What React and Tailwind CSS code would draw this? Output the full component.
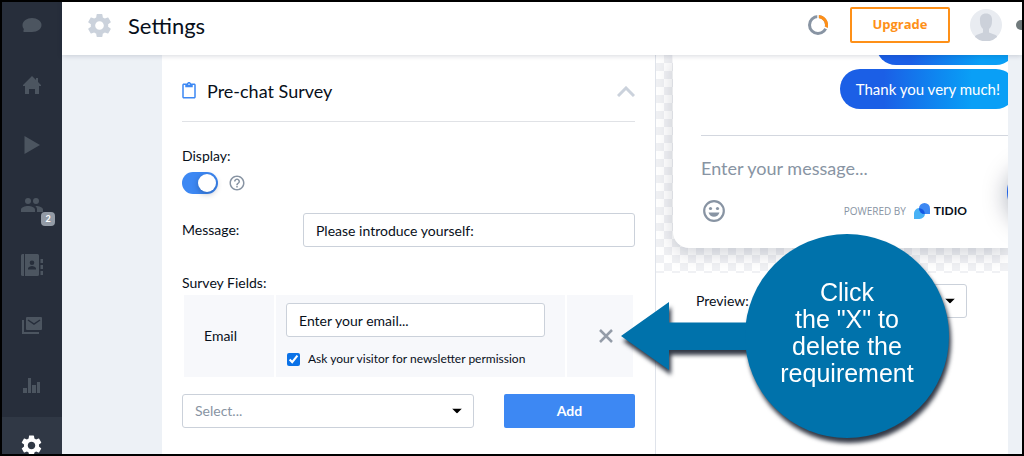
import { useState } from "react";
import { MdContentPaste, MdHelpOutline, MdSettings } from "react-icons/md";

const ChatIcon = () => (
  <svg width="20" height="16" viewBox="0 0 20 16" fill="currentColor">
    <path d="M10 1c5 0 9.500 3 9.500 7s-4 7-9.500 7H1.500v-2L2 12C.8 11 .5 9.500.5 8c0-4 4.500-7 9.500-7Z" />
  </svg>
);

const HomeIcon = () => (
  <svg width="20" height="20" viewBox="0 0 20 20" fill="currentColor">
    <path d="m10 1 4 4V3h2v4l3 3v1h-2v8h-4v-5H7v5H3v-8H1v-1Z" />
  </svg>
);

const PlayIcon = () => (
  <svg width="16" height="20" viewBox="0 0 16 20" fill="currentColor">
    <path d="M0.500 1v18L16 10Z" />
  </svg>
);

const PeopleIcon = () => (
  <svg width="22" height="14" viewBox="0 0 22 14" fill="currentColor">
    <circle cx="7" cy="3" r="3" />
    <circle cx="15" cy="3" r="3" />
    <path d="M0 14v-2.500C0 9.500 4 8 7 8s7 1.500 7 3.500V14ZM15 8c3 0 7 1.500 7 3.500V14h-6v-2.500c0-1.500-.6-2.600-1.700-3.400Z" />
  </svg>
);

const ContactsIcon = () => (
  <svg width="22" height="22" viewBox="0 0 22 22" fill="currentColor">
    <path d="M0 1.500Q0 0 1.500 0H3v22H1.500Q0 22 0 20.500Z" />
    <path
      fillRule="evenodd"
      d="M4 0h12.500Q18 0 18 1.500v19Q18 22 16.500 22H4ZM11 6.500a2.300 2.300 0 1 0 0 4.600 2.300 2.300 0 0 0 0-4.600ZM7 15.500h8v-1c0-1.500-2.500-2.500-4-2.500s-4 1-4 2.500Z"
    />
    <path d="M19.500 5H22v4h-2.500ZM19.500 11H22v4h-2.500ZM19.500 17H22v4h-2.500Z" />
  </svg>
);

const MailIcon = () => (
  <svg width="20" height="17" viewBox="0 0 20 17" fill="none" stroke="currentColor">
    <rect x="4" y="0" width="16" height="13" rx="1" fill="currentColor" stroke="none" />
    <path d="M1 3v13h16" strokeWidth="2" />
    <path d="m6 3 6 4 6-4" stroke="#272e3b" strokeWidth="1.500" />
  </svg>
);

const ChartIcon = () => (
  <svg width="18" height="16" viewBox="0 0 18 16" fill="currentColor">
    <path d="M0 11h4v5H0ZM5 1h3v15H5ZM9 8h4v8H9ZM14 5h3v11h-3Z" />
  </svg>
);

const navItems = [
  { label: "Chat", icon: <ChatIcon /> },
  { label: "Home", icon: <HomeIcon /> },
  { label: "Live", icon: <PlayIcon /> },
  { label: "Visitors", icon: <PeopleIcon />, badge: 2 },
  { label: "Contacts", icon: <ContactsIcon /> },
  { label: "Mailing", icon: <MailIcon /> },
  { label: "Analytics", icon: <ChartIcon /> },
];

const Sidebar = () => (
  <nav className="w-15 shrink-0 overflow-hidden bg-[#272e3b] text-[#4c5560]">
    <div className="-mt-[7px]">
      {navItems.map(({ label, icon, badge }) => (
        <a
          key={label}
          href="#"
          aria-label={label}
          className="relative flex h-15 items-center justify-center hover:text-white"
        >
          {icon}
          {badge && (
            <span className="absolute right-[7px] bottom-[9px] flex h-3.5 w-3.5 items-center justify-center rounded bg-[#939ba6] text-[9px] font-bold text-white">
              {badge}
            </span>
          )}
        </a>
      ))}
      <a
        href="#"
        aria-label="Settings"
        className="mt-0.5 flex h-14 items-center justify-center bg-[#303845] pr-px text-white"
      >
        <MdSettings size={25} />
      </a>
    </div>
  </nav>
);

const Header = () => (
  <header className="relative z-10 flex h-[53px] shrink-0 items-center bg-white pb-[7px] pl-[23px] shadow-[0_1px_5px_rgba(0,18,46,0.16)]">
    <MdSettings size={29} className="text-[#cbd2dc]" />
    <h1 className="ml-3.5 text-[22px] text-[#080f1a]">Settings</h1>
    <div className="ml-auto flex items-center">
      <svg width="20" height="20" viewBox="0 0 20 20" fill="none" strokeWidth="3" className="mr-[22px]">
        <circle cx="10" cy="10" r="8.500" stroke="#8894a3" />
        <path d="M10.500 1.500A8.500 8.500 0 0 1 18 13" stroke="#fe8f18" />
        <path d="M10 0v4M16 12l4 2" stroke="#fff" strokeWidth="1.500" />
      </svg>
      <button className="h-9 w-25 rounded-xs border-2 border-[#fe9018] bg-white font-['Open_Sans',sans-serif] text-[13px] font-bold text-[#fe9018]">
        Upgrade
      </button>
      <svg width="32" height="32" viewBox="0 0 32 32" className="ml-5">
        <circle cx="16" cy="16" r="16" fill="#e9ecf1" />
        <path
          d="M16 4.500c-4.500 0-6.500 3-6 7.500 0 4 1 6 3 8v3.500l-6.500 2.500c-1 .5-1.500 1-1.500 2a16 16 0 0 0 22 0c0-1-.5-1.500-1.500-2L19 23.500V20c2-2 3-4 3-8 .5-4.500-1.500-7.500-6-7.500Z"
          fill="#ccd1da"
        />
      </svg>
      <span className="ml-3.5 flex w-1.5 overflow-hidden">
        <span className="h-2.5 w-2.5 shrink-0 rounded-full bg-[#707a7c]" />
      </span>
    </div>
  </header>
);

const Caret = () => (
  <svg
    width="10"
    height="5"
    viewBox="0 0 10 5"
    className="pointer-events-none absolute top-1/2 right-3 -translate-y-1/2"
  >
    <path d="M0 0h10L5 5Z" />
  </svg>
);

const inputClass =
  "h-[34px] rounded-[3px] border border-[#cbd1da] bg-white px-3 text-sm outline-none";

const SurveySettings = () => {
  const [display, setDisplay] = useState(true);
  const [newsletter, setNewsletter] = useState(true);

  return (
    <section className="border-r border-[#dfe3ea] bg-white px-5">
      <div className="flex h-[67px] items-center border-b border-[#e0e2e6] pt-1.5">
        <MdContentPaste size={18} className="-ml-0.5 text-[#3d88f3]" />
        <h2 className="ml-[9px] text-lg">Pre-chat Survey</h2>
        <button aria-label="Collapse" className="ml-auto">
          <svg width="18" height="11" viewBox="0 0 18 11" fill="none" stroke="#cbd2dc" strokeWidth="3">
            <path d="m1 10 8-8 8 8" />
          </svg>
        </button>
      </div>

      <label htmlFor="display" className="mt-6 block text-sm">
        Display:
      </label>
      <div className="mt-1.5 flex items-center gap-[11px]">
        <span className="relative flex h-[22px] w-9">
          <input
            id="display"
            type="checkbox"
            checked={display}
            onChange={() => setDisplay(!display)}
            className="peer h-full w-full appearance-none rounded-full bg-gray-300 checked:bg-[#3d88f3]"
          />
          <span className="pointer-events-none absolute top-0.5 left-0.5 h-[18px] w-[18px] rounded-full bg-white shadow-[0_2px_6px_rgba(0,18,46,0.3)] peer-checked:right-0.5 peer-checked:left-auto" />
        </span>
        <MdHelpOutline size={18} className="-ml-px text-[#8894a3]" />
      </div>

      <div className="mt-[19px] flex items-center">
        <label htmlFor="message" className="w-[121px] shrink-0 text-sm">
          Message:
        </label>
        <input id="message" defaultValue="Please introduce yourself:" className={`${inputClass} min-w-0 flex-1`} />
      </div>

      <p className="mt-[26px] text-sm">Survey Fields:</p>
      <table className="w-full border-separate border-spacing-0.5">
        <tbody>
          <tr className="h-[82px]">
            <th scope="row" className="w-[90px] bg-[#f7f8fb] pl-5 text-left text-sm font-normal">
              Email
            </th>
            <td className="bg-[#f7f8fb] pt-2 pr-5 pl-2.5 align-top">
              <input aria-label="Email placeholder" defaultValue="Enter your email..." className={`${inputClass} w-full`} />
              <label className="mt-3.5 flex items-center gap-2 text-xs">
                <input
                  type="checkbox"
                  checked={newsletter}
                  onChange={() => setNewsletter(!newsletter)}
                  className="ml-px h-[13px] w-[13px] accent-[#0b72e7]"
                />
                Ask your visitor for newsletter permission
              </label>
            </td>
            <td className="w-[66px] bg-[#f7f8fb] pr-5">
              <button aria-label="Delete field" className="ml-auto block">
                <svg width="14" height="14" viewBox="0 0 14 14" stroke="#949ca8" strokeWidth="2.500">
                  <path d="m1 1 12 12M13 1 1 13" />
                </svg>
              </button>
            </td>
          </tr>
        </tbody>
      </table>

      <div className="mt-[15px] flex gap-[30px]">
        <div className="relative flex-1">
          <select aria-label="Survey field" className={`${inputClass} w-full appearance-none text-[#8894a3]`}>
            <option>Select...</option>
          </select>
          <Caret />
        </div>
        <button className="h-[34px] w-[131px] rounded-xs bg-[#3d88f3] text-sm font-bold text-white">Add</button>
      </div>
    </section>
  );
};

const ChatPreview = () => (
  <section className="overflow-hidden bg-white">
    <div className="relative h-[218px] overflow-hidden bg-[repeating-conic-gradient(#f0f1f4_0_25%,#fff_0_50%)] bg-[length:16px_16px] pl-[17px]">
      <div className="h-[193px] rounded-bl-2xl bg-white pl-7 shadow-[0_5px_18px_rgba(0,18,46,0.18)]">
        <div className="-mr-2 flex h-20 flex-col items-end justify-end gap-1 pb-[26px]">
          <div className="h-10 w-[140px] shrink-0 rounded-full bg-linear-to-r from-[#1b5fe6] from-25% to-[#0a9ff6] to-75%" />
          <p className="flex h-10 shrink-0 items-center rounded-full bg-linear-to-r from-[#1b5fe6] from-25% to-[#0a9ff6] to-75% px-4 text-[15px] text-white">
            Thank you very much!
          </p>
        </div>
        <input
          aria-label="Message"
          placeholder="Enter your message..."
          className="h-[65px] w-full border-t border-[#d3d7df] text-lg outline-none placeholder:text-[#8894a3]"
        />
        <div className="flex items-center pr-[41px]">
          <button aria-label="Emoji" className="ml-0.5">
            <svg width="22" height="22" viewBox="0 0 22 22" fill="#8894a3">
              <circle cx="11" cy="11" r="9.800" fill="none" stroke="#8894a3" strokeWidth="2.200" />
              <circle cx="7.500" cy="8.500" r="1.600" />
              <circle cx="14.500" cy="8.500" r="1.600" />
              <path d="M5.500 12.500h11c-.8 2.700-3 4.300-5.500 4.300s-4.700-1.600-5.500-4.300Z" />
            </svg>
          </button>
          <a href="#" className="ml-auto flex items-center font-['Open_Sans',sans-serif] text-[10px] text-[#8894a3]">
            POWERED BY
            <svg width="16" height="16" viewBox="0 0 16 16" className="mr-1 ml-2">
              <path d="M0 16v-5a5.500 5.500 0 1 1 5.500 5Z" fill="#48b1f5" />
              <path d="M16 11V5.500A5.500 5.500 0 1 0 10.500 11Z" fill="#3d88f3" />
              <path d="M5 5.300A5.500 5.500 0 0 1 10.800 11 5.500 5.500 0 0 1 5 5.300Z" fill="#1458e4" />
            </svg>
            <span className="font-[Lato,sans-serif] text-xs font-bold text-[#080f1a]">TIDIO</span>
          </a>
        </div>
      </div>
      <button
        aria-label="Open chat"
        className="absolute top-[107px] -right-[59px] h-15 w-15 rounded-full bg-[#1b5fe6] shadow-[0_4px_24px_rgba(0,18,46,0.35)]"
      />
    </div>

    <div className="flex items-center pt-[11px] pl-10">
      <label htmlFor="preview" className="text-sm">
        Preview:
      </label>
      <div className="relative ml-4">
        <select id="preview" className={`${inputClass} w-[202px] appearance-none`}>
          <option>Online</option>
        </select>
        <Caret />
      </div>
    </div>
  </section>
);

const Callout = () => (
  <div className="absolute top-[232px] left-[619px] z-20 flex items-center drop-shadow-[2px_5px_2px_rgba(0,8,24,0.8)]">
    <svg width="136" height="68" viewBox="0 0 136 68" fill="#0072ab" className="-mr-3">
      <path d="M0 34 48 0v20.500h88v27.500H48V68Z" />
    </svg>
    <p className="flex h-51 w-51 items-center justify-center rounded-full bg-[#0072ab] pb-1.5 text-center font-['Liberation_Sans',Arial,sans-serif] text-[25px] leading-[27px] text-white">
      Click
      <br />
      the "X" to
      <br />
      delete the
      <br />
      requirement
    </p>
  </div>
);

const App = () => (
  <div className="relative flex h-screen overflow-hidden border-2 border-black bg-[#edf1f6] font-[Lato,sans-serif] text-[#080f1a]">
    <Sidebar />
    <div className="flex min-w-0 flex-1 flex-col">
      <Header />
      <main className="grid flex-1 grid-cols-[minmax(0,1fr)_352px] pr-3.5 pl-25">
        <SurveySettings />
        <ChatPreview />
      </main>
    </div>
    <Callout />
  </div>
);

export default App;
